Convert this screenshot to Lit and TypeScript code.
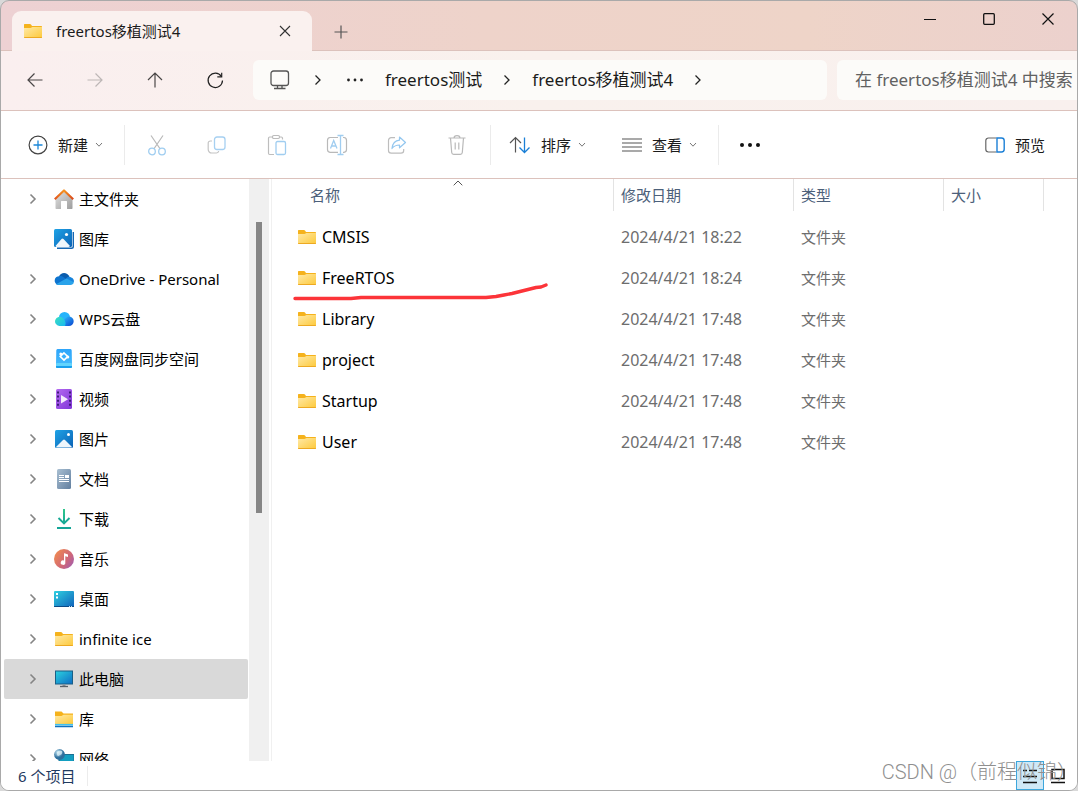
import { LitElement, html, css, svg, nothing, TemplateResult } from "lit";
import { customElement, property, state } from "lit/decorators.js";
import { classMap } from "lit/directives/class-map.js";

const icon = (w: number, h: number, body: TemplateResult, cls = "") =>
  html`<svg class="icon ${cls}" width=${w} height=${h} viewBox="0 0 ${w} ${h}" fill="none" aria-hidden="true">${body}</svg>`;

/* ---------- line icons ---------- */
const line = {
  back: icon(20, 20, svg`<path d="M3 10H17.500M9.500 3.500L3 10L9.500 16.500" stroke="#4a4747" stroke-width="1.200"/>`),
  forward: icon(20, 20, svg`<path d="M2.500 10H17M10.500 3.500L17 10L10.500 16.500" stroke="#bdb7b6" stroke-width="1.200"/>`),
  up: icon(20, 20, svg`<path d="M10 3V17.500M3 10L10 3L17 10" stroke="#4a4747" stroke-width="1.200"/>`),
  refresh: icon(20, 20, svg`<path d="M16.300 6.300A7.200 7.200 0 1 0 17.500 10.500" stroke="#222" stroke-width="1.200"/><path d="M16.700 2.700V6.800H12.300" stroke="#222" stroke-width="1.200"/>`),
  monitor: icon(20, 20, svg`<rect x="1" y="1" width="17.500" height="14.500" rx="2.500" stroke="#555" stroke-width="1.300"/><path d="M7.500 15.500V18M12 15.500V18M4 18.500H15.500" stroke="#555" stroke-width="1.300"/>`),
  crumb: icon(8, 12, svg`<path d="M1.500 1.500L6 6L1.500 10.500" stroke="#222" stroke-width="1.300"/>`),
  more: icon(18, 6, svg`<circle cx="2.500" cy="3" r="1.400" fill="#222"/><circle cx="9" cy="3" r="1.400" fill="#222"/><circle cx="15.500" cy="3" r="1.400" fill="#222"/>`),
  moreBig: icon(22, 6, svg`<circle cx="3" cy="3" r="2" fill="#111"/><circle cx="11" cy="3" r="2" fill="#111"/><circle cx="19" cy="3" r="2" fill="#111"/>`),
  close: icon(12, 12, svg`<path d="M1 1L11 11M11 1L1 11" stroke="#333" stroke-width="1.100"/>`),
  closeWin: icon(14, 14, svg`<path d="M1.500 1.500L12.500 12.500M12.500 1.500L1.500 12.500" stroke="#111" stroke-width="1.200"/>`),
  plus: icon(14, 14, svg`<path d="M7 .5V13.500M.5 7H13.500" stroke="#555" stroke-width="1.200"/>`),
  min: icon(12, 12, svg`<path d="M0 6.500H12" stroke="#111"/>`),
  max: icon(12, 12, svg`<rect x=".7" y=".7" width="10.600" height="10.600" rx="1" stroke="#111" stroke-width="1.300"/>`),
  add: icon(20, 20, svg`<circle cx="10" cy="10" r="8.900" stroke="#444" stroke-width="1.200"/><path d="M10 5.500V14.500M5.500 10H14.500" stroke="#1a86d8" stroke-width="1.300"/>`),
  down: icon(8, 6, svg`<path d="M1 1L4 4.200L7 1" stroke="#777"/>`),
  cut: icon(20, 22, svg`<path d="M4 1.500L13.200 15M16 1.500L6.800 15" stroke="#b9b9b9" stroke-width="1.200"/><circle cx="5" cy="17.500" r="3.300" stroke="#9fcdf0" stroke-width="1.300"/><circle cx="15" cy="17.500" r="3.300" stroke="#9fcdf0" stroke-width="1.300"/>`),
  copy: icon(20, 20, svg`<path d="M5 6H3.500A2.200 2.200 0 0 0 1.200 8.500V14.500A3.500 3.500 0 0 0 4.700 18H9.500A2.300 2.300 0 0 0 11.700 16" stroke="#c4c4c4" stroke-width="1.200"/><rect x="7.500" y="2" width="10.500" height="12.500" rx="2.500" stroke="#a6d0f1" stroke-width="1.300"/>`),
  paste: icon(20, 22, svg`<path d="M6 3H2.700A1.200 1.200 0 0 0 1.500 4.200V19.300A1.200 1.200 0 0 0 2.700 20.500H7M12.500 3H14.300A1.200 1.200 0 0 1 15.500 4.200V5.500" stroke="#bdbdbd" stroke-width="1.200"/><rect x="5.500" y="1.500" width="7" height="3" rx="1.200" stroke="#bdbdbd" stroke-width="1.200"/><rect x="9" y="7.500" width="9.500" height="13" rx="1.500" stroke="#a0cdf0" stroke-width="1.300"/>`),
  rename: icon(22, 22, svg`<path d="M12 3.500H4A2.800 2.800 0 0 0 1.500 6.300V15.500A2.800 2.800 0 0 0 4 18.300H12M17 3.500H18A2.800 2.800 0 0 1 20.500 6.300V15.500A2.800 2.800 0 0 1 18 18.300H17" stroke="#b9b9b9" stroke-width="1.200"/><path d="M11.500 1.500H17.500M14.500 1.500V20.500M11.500 20.500H17.500M4.500 14.500L7.700 6.500L11 14.500M5.500 12H10" stroke="#a0cdf0" stroke-width="1.300"/>`),
  share: icon(20, 20, svg`<path d="M8 2.700H4.200A2.700 2.700 0 0 0 1.500 5.400V15.500A2.700 2.700 0 0 0 4.200 18.200H14A2.700 2.700 0 0 0 16.700 15.500V14" stroke="#bdbdbd" stroke-width="1.200"/><path d="M12.500 2L18.500 7.500L12.500 12.800V10C9 10 7 11 5 13.500C5.500 9 8 5.500 12.500 5.200Z" stroke="#94c7ef" stroke-width="1.200" stroke-linejoin="round"/>`),
  trash: icon(20, 22, svg`<path d="M1.500 4H18.500M7 4C7 .7 13 .7 13 4M3.500 4L4.700 18.500A2 2 0 0 0 6.700 20.300H13.300A2 2 0 0 0 15.300 18.500L16.500 4M8.200 8.500V15.500M11.800 8.500V15.500" stroke="#b9b9b9" stroke-width="1.200"/>`),
  sort: icon(22, 18, svg`<path d="M6.500 1.500V16.500M1 7L6.500 1.500L12 7" stroke="#555" stroke-width="1.200"/><path d="M15.500 1.500V16.500M10.500 11.500L15.500 16.500L20.500 11.500" stroke="#1a7fd6" stroke-width="1.300"/>`),
  view: icon(20, 14, svg`<path d="M0 1H20M0 5H20M0 9H20M0 13H20" stroke="#555" stroke-width="1.200"/>`),
  preview: icon(20, 16, svg`<path d="M11.500 1H3.500A2.700 2.700 0 0 0 .8 3.700V12.300A2.700 2.700 0 0 0 3.500 15H11.500" stroke="#666" stroke-width="1.200"/><path d="M12 1H16.500A2.700 2.700 0 0 1 19.200 3.700V12.300A2.700 2.700 0 0 1 16.500 15H12Z" stroke="#1a7fd6" stroke-width="1.400"/>`),
  expand: icon(8, 12, svg`<path d="M1.500 1.500L6 6L1.500 10.500" stroke="#858585" stroke-width="1.600"/>`),
  sortMark: icon(10, 6, svg`<path d="M.7 5.300L5 1L9.300 5.300" stroke="#555"/>`),
  details: icon(16, 16, svg`<path d="M1 2.500H5M7 2.500H15M1 8.500H15M1 14.500H15" stroke="#111" stroke-width="1.500"/>`),
  tiles: icon(16, 16, svg`<rect x="2" y="1.500" width="12" height="9" stroke="#111" stroke-width="1.500"/><path d="M1 14.500H15" stroke="#111" stroke-width="1.500"/>`),
};

/* ---------- coloured icons ---------- */
const folder = icon(20, 18, svg`
  <defs><linearGradient id="fd" x1="0" y1="0" x2="1" y2="1"><stop stop-color="#ffe9a6"/><stop offset="1" stop-color="#fdc93a"/></linearGradient></defs>
  <path d="M1 3.500V2.600Q1 2 1.700 2H7Q7.500 2 8 2.600L9 4H18.300Q19 4 19 4.700V7H1Z" fill="#f5b21c"/>
  <path d="M1 6H7.500L9.500 5H19V15.200Q19 16 18.200 16H1.800Q1 16 1 15.200Z" fill="url(#fd)"/>
  <path d="M1 15H19V15.300Q19 16 18.200 16H1.800Q1 16 1 15.300Z" fill="#eda922"/>`);

const picture = (id: string) => svg`
  <defs><linearGradient id=${id} x1="0" y1="0" x2="1" y2="1"><stop stop-color="#1fa3e6"/><stop offset="1" stop-color="#0b62b5"/></linearGradient></defs>`;

const art: Record<string, TemplateResult> = {
  home: icon(20, 20, svg`
    <defs><linearGradient id="hm" x1="0" y1="0" x2="1" y2="1"><stop stop-color="#e2e2e2"/><stop offset="1" stop-color="#9d9d9d"/></linearGradient>
    <linearGradient id="hr"><stop stop-color="#e0521d"/><stop offset=".5" stop-color="#f6941f"/><stop offset="1" stop-color="#d8461b"/></linearGradient></defs>
    <path d="M1.500 10L10 2L18.500 10V19.200Q18.500 20 17.700 20H13V12.500Q13 12 12.500 12H7.500Q7 12 7 12.500V20H2.300Q1.500 20 1.500 19.200Z" fill="url(#hm)"/>
    <path d="M.8 10.300L10 1.500L19.200 10.300" stroke="url(#hr)" stroke-width="2.200" stroke-linejoin="round"/>`),
  gallery: icon(20, 20, svg`${picture("gl")}
    <path d="M3 19.300H17.500Q19.300 19.300 19.300 17.500V3" stroke="#1567b4" stroke-width="1.400"/>
    <rect width="18" height="18" rx="1.500" fill="url(#gl)"/><circle cx="12.500" cy="5.500" r="1.600" fill="#fff"/>
    <path d="M1.500 17L7.500 10Q8.500 8.900 9.500 10L16 17Q15 18 14.500 18H3Q2 18 1.500 17Z" fill="#eef6fc"/>`),
  onedrive: icon(20, 20, svg`
    <path d="M5 7.500C6.500 3 13.500 2.500 15.500 8L10 12Z" fill="#0a5cad"/>
    <path d="M4.500 16A4.400 4.400 0 1 1 5.700 7.200C7.200 6.800 8.500 7.500 10 8.500L14 11L8 16Z" fill="#0e74cf"/>
    <path d="M12 9.300C13.500 7.600 16 7.200 17.200 8.600C19.500 9.200 20.300 11.500 19.800 13L13 13Z" fill="#1683dc"/>
    <path d="M2 15.200L11.500 10Q12.500 9.500 13.500 10L19.900 13.300C19.500 15 18 16 16.500 16H4.500Q3 16 2 15.200Z" fill="#2aa3ea"/>`),
  wps: icon(20, 20, svg`
    <defs><linearGradient id="w1" x1="0" y1="0" x2="1" y2="1"><stop stop-color="#3be0c0"/><stop offset="1" stop-color="#19b8f0"/></linearGradient>
    <linearGradient id="w2" x1="0" y1="0" x2="1" y2="1"><stop stop-color="#2fc2ff"/><stop offset="1" stop-color="#0a43cf"/></linearGradient></defs>
    <circle cx="10.500" cy="8.500" r="5.500" fill="#25b4fb"/>
    <path d="M10 17L8 12L14 7.500A4.800 4.800 0 1 1 14.500 17Z" fill="url(#w2)"/>
    <path d="M5.300 17A4.600 4.600 0 1 1 8.500 8.800Q13 12 11 17Z" fill="url(#w1)"/>`),
  baidu: icon(20, 20, svg`
    <defs><linearGradient id="bd" x1="0" y1="0" x2="0" y2="1"><stop stop-color="#2da5fb"/><stop offset="1" stop-color="#43b9fc"/></linearGradient></defs>
    <path d="M3.500 0H16.500Q17.700 0 17.700 1.500L18 15H2L2.300 1.500Q2.300 0 3.500 0Z" fill="url(#bd)"/>
    <rect x="2" y="14" width="16" height="5" rx="1" fill="#62d4fd"/><path d="M2 17H18V18Q18 19 17 19H3Q2 19 2 18Z" fill="#18a0ed"/>
    <path d="M10 4L13.700 7.500L10 11L6.300 7.500Z" stroke="#fff" stroke-width="1.700"/><circle cx="6.800" cy="5" r="1.500" fill="#fff"/><circle cx="13.800" cy="8" r="1.500" fill="#fff"/>`),
  video: icon(20, 20, svg`
    <defs><linearGradient id="vd" x1="0" y1="0" x2="1" y2="1"><stop stop-color="#b46af0"/><stop offset="1" stop-color="#8136d8"/></linearGradient></defs>
    <rect x="2" width="16" height="20" rx="1.500" fill="url(#vd)"/>
    <path d="M4 2.500V18.500M16 2.500V18.500" stroke="#3e1d78" stroke-width="2" stroke-dasharray="2 2.100"/>
    <path d="M7 6V14.500L14 10.200Z" fill="#f4eafc"/>`),
  picture: icon(20, 20, svg`${picture("pc")}
    <rect x="1" y="1" width="18" height="18" rx="1.500" fill="url(#pc)"/><circle cx="14.500" cy="5.500" r="1.500" fill="#fff"/>
    <path d="M2 18L9 11Q10 10 11 11L18 18Q17.700 18.500 17 18.500H3Q2.300 18.500 2 18Z" fill="#eef6fc"/>`),
  doc: icon(20, 20, svg`
    <defs><linearGradient id="dc" x1="0" y1="0" x2="1" y2="1"><stop stop-color="#a9bfd2"/><stop offset="1" stop-color="#627f9f"/></linearGradient></defs>
    <rect x="3" width="14" height="20" rx="1.500" fill="url(#dc)"/>
    <path d="M5 6.500H10M5 8.500H10M5 10.500H15M5 12.500H15" stroke="#fff"/><rect x="11" y="6" width="4" height="3" fill="#fff"/>`),
  download: icon(20, 20, svg`
    <defs><linearGradient id="dl" x1="0" y1="0" x2="0" y2="20" gradientUnits="userSpaceOnUse"><stop stop-color="#2fc78c"/><stop offset="1" stop-color="#0f9e97"/></linearGradient></defs>
    <path d="M9 0H11V13.500H9Z" fill="url(#dl)"/><path d="M4.500 9L10 14.500L15.500 9" stroke="#17a995" stroke-width="1.900"/><path d="M3 19H17" stroke="#14a597" stroke-width="2"/>`),
  music: icon(20, 20, svg`
    <defs><linearGradient id="ms" x1="0" y1=".2" x2="1" y2=".9"><stop stop-color="#f08a4f"/><stop offset=".6" stop-color="#cf6679"/><stop offset="1" stop-color="#9d5cb4"/></linearGradient></defs>
    <circle cx="10" cy="10" r="10" fill="url(#ms)"/><path d="M10 4.500Q10 4 10.500 4.200L14 5.500V8L11.300 7.200V13.300A2.300 2.300 0 1 1 10 11.500Z" fill="#fff"/>`),
  desktop: icon(20, 20, svg`
    <defs><linearGradient id="dt" x1="0" y1="0" x2="1" y2="1"><stop stop-color="#2fd0e0"/><stop offset="1" stop-color="#1062bb"/></linearGradient></defs>
    <rect y="2" width="20" height="16" rx="1" fill="url(#dt)"/><path d="M0 17H20V17.500Q20 18 19 18H1Q0 18 0 17.500Z" fill="#0b4a86"/>
    <path d="M2 4H4V6H2ZM2 7.500H4V9.500H2Z" fill="#fff"/><path d="M15 17.500H19" stroke="#bfe4f7" stroke-dasharray="1 1"/>`),
  folder,
  pc: icon(20, 20, svg`
    <defs><linearGradient id="pm" x1="0" y1="0" x2="1" y2="1"><stop stop-color="#2bd3e0"/><stop offset="1" stop-color="#0f6cc4"/></linearGradient></defs>
    <rect x="1.500" y="2" width="17" height="13" fill="url(#pm)" stroke="#1b5f86"/><path d="M10 15.500V17.500" stroke="#8a9199" stroke-width="3"/><path d="M6 17.500H14" stroke="#5a6068" stroke-width="1.300"/>`),
  library: icon(20, 20, svg`
    <defs><linearGradient id="lb" x1="0" y1="0" x2="1" y2="1"><stop stop-color="#ffe9a6"/><stop offset="1" stop-color="#fdc93a"/></linearGradient></defs>
    <path d="M1 2.500H7.500L9.500 4.500H19V8H1Z" fill="#f5b21c"/><path d="M1 7H7.500L9.500 5.800H19V15H1Z" fill="url(#lb)"/>
    <path d="M1 15.700H19" stroke="#3fc1f0" stroke-width="1.600"/><path d="M1 17.500H19" stroke="#1272bd" stroke-width="1.500"/>`),
  network: icon(20, 20, svg`
    <defs><radialGradient id="nw" cx=".35" cy=".3"><stop stop-color="#c9e9f6"/><stop offset="1" stop-color="#2d6f9d"/></radialGradient></defs>
    <rect x="5" y="5.500" width="15" height="11" fill="#139ec0" stroke="#1b6f93"/><circle cx="5.500" cy="5.500" r="5.400" fill="url(#nw)"/><path d="M3 3Q5 1 8 2Q9 5 6 6Q4 8 3 6Z" fill="#e2f3f8" fill-opacity=".7"/>`),
};

const control = css`
  button { font: inherit; color: inherit; background: none; border: 0; padding: 0; margin: 0; display: flex; align-items: center; justify-content: center; }
  a { color: inherit; text-decoration: none; }
  .icon { display: block; flex: none; }
`;

/* ---------- title bar with tab ---------- */
@customElement("title-bar")
class TitleBar extends LitElement {
  @property() heading = "";
  static styles = [control, css`
    :host { display: flex; height: 49px; border-bottom: 1px solid #dcc2bc; }
    .tab { display: flex; align-items: center; width: 300px; height: 40px; margin: 10px 0 -1px 11px; padding: 0 21px 0 11px; box-sizing: border-box;
      border-radius: 9px 9px 0 0; background: #faf1ef; }
    .name { flex: 1; margin-left: 13px; color: #1b1b1b; white-space: nowrap; }
    .add { width: 58px; margin-top: 12px; }
    .gap { flex: 1; }
    .win { width: 59px; height: 36px; }
  `];
  render() {
    return html`
      <div class="tab">${folder}<span class="name">${this.heading}</span><button aria-label="关闭标签页">${line.close}</button></div>
      <button class="add" aria-label="新建标签页">${line.plus}</button>
      <div class="gap"></div>
      <button class="win" aria-label="最小化">${line.min}</button>
      <button class="win" aria-label="最大化">${line.max}</button>
      <button class="win" aria-label="关闭">${line.closeWin}</button>`;
  }
}

/* ---------- navigation and address ---------- */
@customElement("address-bar")
class AddressBar extends LitElement {
  @property({ type: Array }) crumbs: string[] = [];
  @property() hint = "";
  static styles = [control, css`
    :host { display: flex; align-items: center; height: 57px; padding-bottom: 2px; background: linear-gradient(90deg, #faefef, #f9f1ed 50%, #f9f0ee); border-bottom: 1px solid #dcc2bc; font-size: 17px; overflow: hidden; }
    .nav { display: flex; width: 252px; padding-left: 4px; box-sizing: border-box; flex: none; }
    .nav button { width: 60px; height: 40px; }
    .path { display: flex; align-items: center; flex: 1; min-width: 0; height: 40px; background: #fcfbf9; border-radius: 6px; padding-left: 17px; box-sizing: border-box; }
    .path .sep { margin: 0 21px; }
    .path .first { margin: 0 24px; }
    .path .dots { margin-right: 21px; }
    .path a { color: #1b1b1b; white-space: nowrap; }
    .search { width: 240px; height: 40px; margin-left: 10px; flex: none; box-sizing: border-box; border: 0; border-radius: 6px 0 0 6px; background: #fcfbf9; padding: 0 0 0 18px; font: inherit; color: #333; }
    .search::placeholder { color: #616161; opacity: 1; }
  `];
  render() {
    return html`
      <nav class="nav">
        <button aria-label="后退">${line.back}</button><button aria-label="前进" disabled>${line.forward}</button>
        <button aria-label="上移">${line.up}</button><button aria-label="刷新">${line.refresh}</button>
      </nav>
      <div class="path">
        <button aria-label="此电脑">${line.monitor}</button><span class="first">${line.crumb}</span>
        <button class="dots" aria-label="更多位置">${line.more}</button>
        ${this.crumbs.map((c) => html`<a href="#">${c}</a><span class="sep">${line.crumb}</span>`)}
      </div>
      <input class="search" type="text" aria-label="搜索" placeholder=${this.hint} />`;
  }
}

/* ---------- command bar ---------- */
@customElement("command-bar")
class CommandBar extends LitElement {
  static styles = [control, css`
    :host { display: flex; align-items: center; height: 67px; border-bottom: 1px solid #dcc2bc; background: #fff; color: #1b1b1b; }
    .menu { gap: 10px; height: 40px; white-space: nowrap; }
    .menu span { margin-right: -3px; }
    .new { padding: 0 21px 0 27px; }
    .rule { width: 1px; height: 40px; background: #ebebeb; }
    .tools { display: flex; padding: 0 3px 0 2px; }
    .tools button { width: 60px; height: 40px; }
    .sort { padding: 0 16px 0 18px; }
    .view { padding: 0 21px 0 20px; }
    .more { width: 61px; height: 40px; }
    .preview { margin-left: auto; padding-right: 35px; }
  `];
  render() {
    return html`
      <button class="menu new">${line.add}<span>新建</span>${line.down}</button>
      <div class="rule"></div>
      <div class="tools">
        ${[["剪切", line.cut], ["复制", line.copy], ["粘贴", line.paste], ["重命名", line.rename], ["共享", line.share], ["删除", line.trash]].map(
          ([label, glyph]) => html`<button aria-label=${label} disabled>${glyph}</button>`)}
      </div>
      <div class="rule"></div>
      <button class="menu sort">${line.sort}<span>排序</span>${line.down}</button>
      <button class="menu view">${line.view}<span>查看</span>${line.down}</button>
      <div class="rule"></div>
      <button class="more" aria-label="查看更多">${line.moreBig}</button>
      <button class="menu preview">${line.preview}<span>预览</span></button>`;
  }
}

/* ---------- sidebar tree ---------- */
interface Place { label: string; art: string; leaf?: boolean; }
const places: Place[] = [
  { label: "主文件夹", art: "home" }, { label: "图库", art: "gallery", leaf: true }, { label: "OneDrive - Personal", art: "onedrive" },
  { label: "WPS云盘", art: "wps" }, { label: "百度网盘同步空间", art: "baidu" }, { label: "视频", art: "video" },
  { label: "图片", art: "picture" }, { label: "文档", art: "doc" }, { label: "下载", art: "download" }, { label: "音乐", art: "music" },
  { label: "桌面", art: "desktop" }, { label: "infinite ice", art: "folder" }, { label: "此电脑", art: "pc" }, { label: "库", art: "library" },
  { label: "网络", art: "network" },
];

@customElement("place-tree")
class PlaceTree extends LitElement {
  @state() private current = "此电脑";
  static styles = [control, css`
    :host { display: flex; width: 270px; flex: none; overflow: hidden; border-right: 1px solid #f0f0f0; }
    ul { list-style: none; margin: 0; padding: 0 1px 0 3px; flex: 1; min-width: 0; color: #000; }
    li { display: flex; align-items: center; height: 40px; padding-left: 21px; border-radius: 2px; }
    .on { background: #d9d9d9; }
    .twist { width: 16px; height: 24px; margin-right: 13px; flex: none; }
    a { display: flex; align-items: center; gap: 5px; flex: 1; white-space: nowrap; }
    .track { width: 20px; background: #f0f0f0; margin-right: 2px; padding-top: 43px; box-sizing: border-box; }
    .thumb { width: 6px; height: 54%; margin-left: 7px; background: #868686; }
  `];
  render() {
    return html`
      <ul>${places.map((p) => html`
        <li class=${classMap({ on: p.label === this.current })}>
          ${p.leaf ? html`<span class="twist"></span>` : html`<button class="twist" aria-label="展开 ${p.label}">${line.expand}</button>`}
          <a href="#" @click=${() => (this.current = p.label)}>${art[p.art]}<span>${p.label}</span></a>
        </li>`)}</ul>
      <div class="track"><div class="thumb"></div></div>`;
  }
}

/* ---------- file list ---------- */
interface Entry { name: string; time: string; marked?: boolean; }
const entries: Entry[] = [
  { name: "CMSIS", time: "2024/4/21 18:22" }, { name: "FreeRTOS", time: "2024/4/21 18:24", marked: true },
  { name: "Library", time: "2024/4/21 17:48" }, { name: "project", time: "2024/4/21 17:48" },
  { name: "Startup", time: "2024/4/21 17:48" }, { name: "User", time: "2024/4/21 17:48" },
];

@customElement("file-list")
class FileList extends LitElement {
  static styles = [control, css`
    :host { display: block; flex: 1; min-width: 0; overflow: hidden; }
    table { width: 100%; table-layout: fixed; border-collapse: collapse; }
    th { height: 37px; padding: 0; text-align: left; vertical-align: top; font-weight: 400; color: #4c607a; position: relative; }
    .head { display: flex; align-items: center; height: 32px; padding-left: 7px; border-right: 1px solid #e3e3e3; }
    .name .head { padding-left: 38px; }
    .mark { position: absolute; top: 1px; left: 50%; margin-left: 10px; }
    td { height: 41px; padding: 0 0 0 7px; color: #6d6d6d; white-space: nowrap; position: relative; }
    .file { padding-left: 25px; }
    .file, .time { font-size: 16px; }
    td a { display: flex; align-items: center; gap: 5px; color: #000; }
    .stroke { position: absolute; left: 19px; top: 24px; pointer-events: none; }
    .c1 { width: 342px; } .c2 { width: 180px; } .c3 { width: 150px; } .c4 { width: 100px; }
  `];
  render() {
    return html`<table>
      <colgroup><col class="c1" /><col class="c2" /><col class="c3" /><col class="c4" /><col /></colgroup>
      <thead><tr>
        <th class="name"><div class="head">名称</div><span class="mark">${line.sortMark}</span></th>
        <th><div class="head">修改日期</div></th><th><div class="head">类型</div></th><th><div class="head">大小</div></th>
        <th></th>
      </tr></thead>
      <tbody>${entries.map((e) => html`<tr>
        <td class="file"><a href="#">${folder}<span>${e.name}</span></a>
          ${e.marked ? html`<svg class="stroke" width="258" height="20" viewBox="0 0 258 20" fill="none" aria-hidden="true">
            <path d="M4 17.500H60L70 16.500H195L205 15.500L213 14L221 12.500L229 10.500L237 8.500L245 6.500L250 6L255 4" stroke="#fc3439" stroke-width="3.400" stroke-linecap="round" stroke-linejoin="round"/></svg>` : nothing}
        </td><td class="time">${e.time}</td><td>文件夹</td><td></td><td></td></tr>`)}</tbody>
    </table>`;
  }
}

/* ---------- window ---------- */
@customElement("app-root")
class AppRoot extends LitElement {
  static styles = [control, css`
    :host { display: block; height: 100vh; background: #d9d9d9; font: 15px/20px "Noto Sans", "Noto Sans CJK SC", sans-serif; }
    .window { position: relative; display: flex; flex-direction: column; height: 100%; box-sizing: border-box; overflow: hidden;
      border: 1px solid #a9a9a9; border-radius: 9px; background: linear-gradient(90deg, #edd1d3, #eed3ca 45%, #eed4c8 75%, #ecd1cd) top / 100% 60px no-repeat, #fff; }
    .body { display: flex; flex: 1; min-height: 0; background: #fff; }
    .status { display: flex; align-items: center; height: 29px; flex: none; padding: 0 5px 0 17px; background: #fff; color: #1f3a5f; }
    .count { padding-right: 12px; border-right: 1px solid #ececec; flex: none; }
    .views { display: flex; margin-left: auto; }
    .views button { width: 28px; height: 29px; box-sizing: border-box; }
    .views .on { background: #cfe8f6; border: 1px solid #3da7dc; }
    .watermark { position: absolute; right: 0; bottom: 6px; font: 300 20px/24px Roboto, "Noto Sans CJK SC", sans-serif; color: #8f8f8f; white-space: nowrap; pointer-events: none; }
  `];
  render() {
    return html`<div class="window">
      <title-bar heading="freertos移植测试4"></title-bar>
      <address-bar .crumbs=${["freertos测试", "freertos移植测试4"]} hint="在 freertos移植测试4 中搜索"></address-bar>
      <command-bar></command-bar>
      <main class="body"><place-tree></place-tree><file-list></file-list></main>
      <footer class="status">
        <span class="count">6 个项目</span>
        <div class="views"><button class="on" aria-label="详细信息">${line.details}</button><button aria-label="大缩略图">${line.tiles}</button></div>
      </footer>
      <div class="watermark">CSDN @（前程似锦）</div>
    </div>`;
  }
}
